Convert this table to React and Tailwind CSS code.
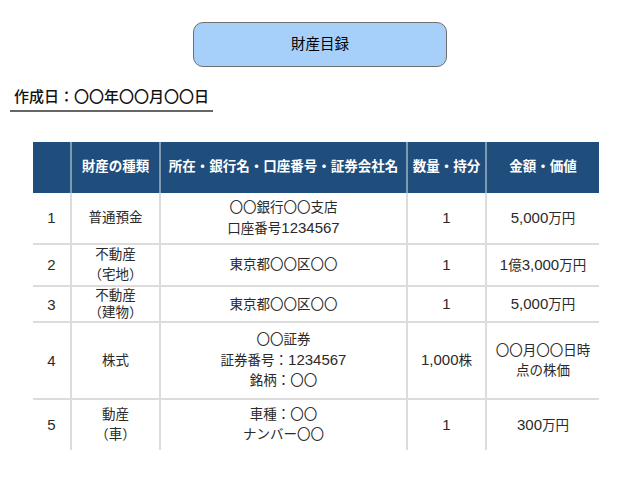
// 財産目録 page
import React from "react";

const rows = [
   { no: "1", kind: ["普通預金"], place: ["〇〇銀行〇〇支店", "口座番号1234567"], qty: "1", value: ["5,000万円"], h: "h-[51px]" },
   { no: "2", kind: ["不動産", "（宅地）"], place: ["東京都〇〇区〇〇"], qty: "1", value: ["1億3,000万円"], h: "h-[39px]" },
   { no: "3", kind: ["不動産", "（建物）"], place: ["東京都〇〇区〇〇"], qty: "1", value: ["5,000万円"], h: "h-[36px]", tight: true },
   { no: "4", kind: ["株式"], place: ["〇〇証券", "証券番号：1234567", "銘柄：〇〇"], qty: "1,000株", value: ["〇〇月〇〇日時", "点の株価"], h: "h-[77px]" },
   { no: "5", kind: ["動産", "（車）"], place: ["車種：〇〇", "ナンバー〇〇"], qty: "1", value: ["300万円"], h: "h-[51px]" },
];

// digits in the reference font sit a little larger than the kana/kanji
const Txt = ({ text }) => (
   <>
      {text.split(/([0-9,]+)/).map((part, i) =>
         /^[0-9,]+$/.test(part) ? (
            <span key={i} className="text-[15px]">{part}</span>
         ) : (
            part
         )
      )}
   </>
);

const Lines = ({ items }) => (
   <>
      {items.map((t, i) => (
         <div key={i}><Txt text={t} /></div>
      ))}
   </>
);

const App = () => {
   return (
      <div className="w-[640px] h-[480px] bg-white overflow-hidden font-['Liberation_Sans','Noto_Sans_CJK_JP',sans-serif]">
         {/* title */}
         <div className="mx-auto mt-[22px] w-[254px] h-[45px] rounded-[10px] border border-[#6f6f6f] bg-[#a6d0fa] flex items-center justify-center text-[14.5px] text-black">
            財産目録
         </div>

         {/* date */}
         <div className="ml-[10px] mt-[20px] w-[203px] border-b-2 border-[#666] pl-[4px] pb-[3px] text-[15px] leading-[20px] font-medium text-[#111] whitespace-nowrap">
            作成日：〇〇年〇〇月〇〇日
         </div>

         {/* table */}
         <table className="ml-[33px] mt-[30px] w-[566px] table-fixed border-collapse text-center">
            <colgroup>
               <col className="w-[38px]" />
               <col className="w-[89px]" />
               <col className="w-[247px]" />
               <col className="w-[79px]" />
               <col className="w-[113px]" />
            </colgroup>
            <thead>
               <tr className="h-[51px] bg-[#1f4d7c] text-white text-[13.5px] font-bold">
                  <th></th>
                  <th className="border-l-2 border-[#8198b2] whitespace-nowrap">財産の種類</th>
                  <th className="border-l-2 border-[#8198b2] whitespace-nowrap">所在・銀行名・口座番号・証券会社名</th>
                  <th className="border-l-2 border-[#8198b2] whitespace-nowrap">数量・持分</th>
                  <th className="border-l-2 border-[#8198b2] whitespace-nowrap">金額・価値</th>
               </tr>
            </thead>
            <tbody className="text-[13.5px] text-[#2a2a2a]">
               {rows.map((r, i) => (
                  <tr
                     key={r.no}
                     className={`${r.h} ${r.tight ? "leading-[17px]" : "leading-[20px]"} ${i < rows.length - 1 ? "border-b-2 border-[#dcdcdc]" : ""}`}
                  >
                     <td className="p-0 text-[15px]">{r.no}</td>
                     <td className="p-0 border-l-2 border-[#dcdcdc]"><Lines items={r.kind} /></td>
                     <td className="p-0 border-l-2 border-[#dcdcdc]"><Lines items={r.place} /></td>
                     <td className="p-0 border-l-2 border-[#dcdcdc]"><Txt text={r.qty} /></td>
                     <td className="p-0 border-l-2 border-[#dcdcdc]"><Lines items={r.value} /></td>
                  </tr>
               ))}
            </tbody>
         </table>
      </div>
   );
};

export default App;
